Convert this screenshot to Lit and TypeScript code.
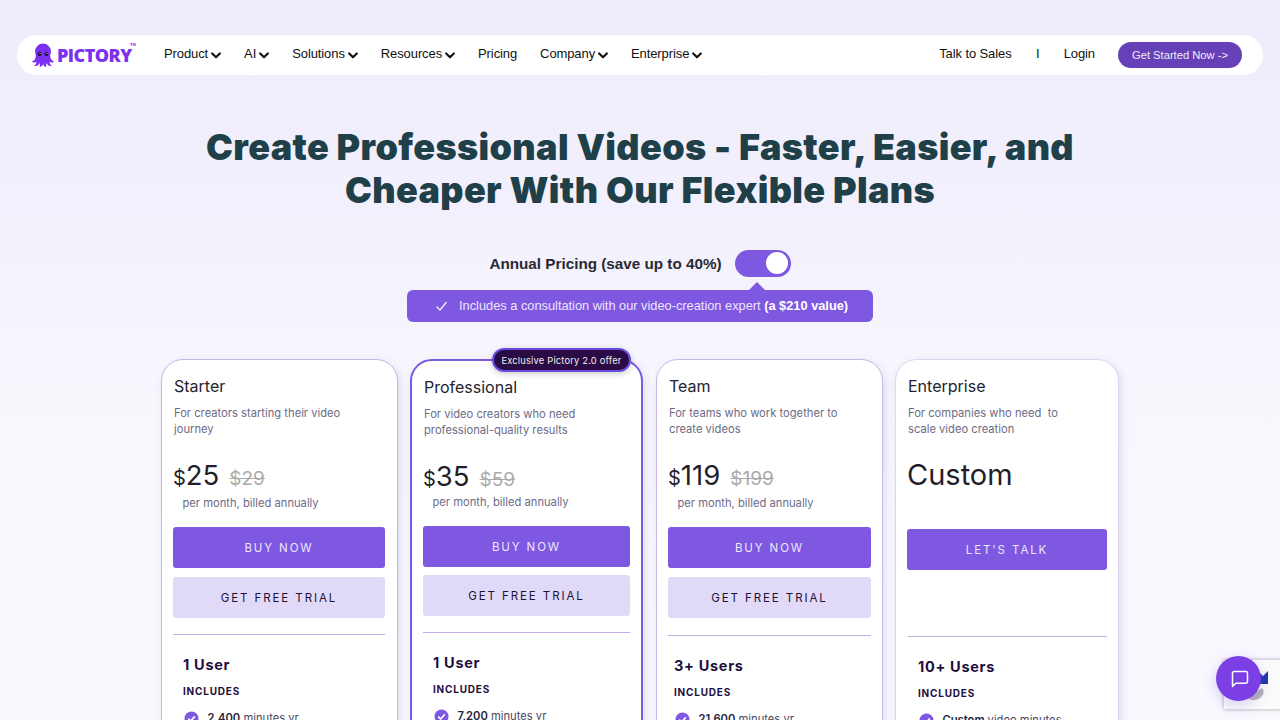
import { LitElement, html, css } from "lit";
import { customElement } from "lit/decorators.js";

const chev = html`<svg class="chev" width="10" height="7" viewBox="0 0 10 7"><path d="M1.2 1.5 5 5.2 8.8 1.5" fill="none" stroke="#111" stroke-width="2.2" stroke-linecap="round" stroke-linejoin="round"/></svg>`;

const octopus = html`<svg width="24" height="24" viewBox="0 0 24 24" class="octo">
  <ellipse cx="12" cy="8.6" rx="8" ry="8" fill="#7c2ff0"/>
  <path d="M5 12C4.5 16 3.5 18 1 18.2 1.5 19.6 4 20 5.5 18.8 5.5 20.5 4.5 22 3 22.6 5 23.6 7.5 22.4 8.6 20 9 21.5 9 23 8.4 24 10.5 24 11.6 22.6 12 21 12.4 22.6 13.5 24 15.6 24 15 23 15 21.5 15.4 20 16.5 22.4 19 23.6 21 22.6 19.5 22 18.5 20.5 18.5 18.8 20 20 22.5 19.6 23 18.2 20.5 18 19.5 16 19 12Z" fill="#7c2ff0"/>
  <circle cx="8.6" cy="11" r="1.9" fill="#1b0b33"/><circle cx="15.4" cy="11" r="1.9" fill="#1b0b33"/>
  <circle cx="9" cy="10.5" r=".6" fill="#fff"/><circle cx="15.8" cy="10.5" r=".6" fill="#fff"/>
</svg>`;

interface Plan {
  cls: string; name: string; desc: unknown; price?: string; old?: string;
  cta: string; trial: boolean; users: string; bold: string; rest: string;
}
const plans: Plan[] = [
  { cls: "starter", name: "Starter", desc: html`For creators starting their video<br>journey`, price: "25", old: "$29", cta: "BUY NOW", trial: true, users: "1 User", bold: "2,400", rest: " minutes yr" },
  { cls: "pro", name: "Professional", desc: html`For video creators who need<br>professional-quality results`, price: "35", old: "$59", cta: "BUY NOW", trial: true, users: "1 User", bold: "7,200", rest: " minutes yr" },
  { cls: "team", name: "Team", desc: html`For teams who work together to<br>create videos`, price: "119", old: "$199", cta: "BUY NOW", trial: true, users: "3+ Users", bold: "21,600", rest: " minutes yr" },
  { cls: "ent", name: "Enterprise", desc: html`For companies who need&nbsp; to<br>scale video creation`, cta: "LET'S TALK", trial: false, users: "10+ Users", bold: "Custom", rest: " video minutes" },
];

@customElement("app-root")
export class AppRoot extends LitElement {
  static styles = css`
    :host { display: block; height: 720px; overflow: hidden; position: relative; font-family: "Liberation Sans", Arial, sans-serif;
      background: linear-gradient(180deg, #eeecfb 0, #f2f0fc 200px, #f8f7fe 400px, #f9f8fe 720px); }
    .nav { display: flex; align-items: center; height: 40px; margin: 0 17px; position: relative; top: 35px; background: #fff; border-radius: 20px; padding: 0 21px 0 14px; }
    .logo { display: flex; align-items: center; width: 133px; position: relative; }
    .logo span { font: 800 18px/24px "Open Sans", sans-serif; color: #7c2ff0; letter-spacing: -.55px; margin-left: 2px; }
    .octo { flex: none; }
    .tm { position: absolute; left: 99px; top: -1px; font: 700 4px/6px "Liberation Sans", sans-serif; color: #7c2ff0; }
    .links { display: flex; gap: 23px; flex: 1; position: relative; top: -1px; }
    .link { font-size: 13px; letter-spacing: -.1px; line-height: 20px; color: #111; white-space: nowrap; display: flex; align-items: center; gap: 3px; }
    .chev { position: relative; top: 1px; }
    .right { display: flex; align-items: center; }
    .talk { font-size: 13px; letter-spacing: -.1px; color: #111; position: relative; top: -2px; }
    .sep { font-size: 13px; margin: 0 24px 0 24.5px; color: #111; position: relative; top: -2px; }
    .go { margin-left: 23px; width: 124px; height: 26px; border-radius: 13px; background: #6540b6; color: #f1ecfb; font-size: 11.2px; display: flex; align-items: center; justify-content: center; }
    .main { padding-top: 51px; position: relative; top: 35px; }
    h1 { margin: 0; text-align: center; font: 900 36px/43px Inter, sans-serif; color: #1f3f49; letter-spacing: .35px; }
    .toggle-row { display: flex; justify-content: center; align-items: center; margin-top: 37px; height: 28px; gap: 13px; }
    .toggle-label { font-size: 15.25px; font-weight: 700; color: #2a2a33; }
    .toggle { width: 56px; height: 27px; border-radius: 14px; background: #7f58e2; position: relative; }
    .knob { position: absolute; right: 3px; top: 2.5px; width: 22px; height: 22px; background: #fff; border-radius: 50%; }
    .note-wrap { display: flex; justify-content: center; margin-top: 13px; }
    .note { position: relative; width: 466px; height: 32px; border-radius: 6px; background: #7f58e2; color: #ebe6fb; font-size: 12.8px; display: flex; align-items: center; box-sizing: border-box; padding: 0 0 1px 28px; white-space: pre; }
    .note::before { content: ""; position: absolute; left: 342px; top: -8px; width: 0; height: 0; border-left: 8px solid transparent; border-right: 8px solid transparent; border-bottom: 8px solid #7f58e2; }
    .note svg { margin-right: 11px; }
    .note b { color: #fff; }
    .cards { display: flex; margin: 37px 0 0 161px; align-items: flex-start; font-family: Inter, sans-serif; }
    .card { box-sizing: border-box; background: #fff; border: 1px solid #c9b6e6; border-radius: 22px; padding: 15px 11px 0; height: 500px; flex: none; box-shadow: 2px 3px 8px rgba(70,50,130,.14); position: relative; }
    .starter { width: 237px; margin-right: 12px; padding-right: 12px; }
    .pro { width: 233px; margin-right: 13px; border: 2px solid #7b5ae0; }
    .team { width: 227px; margin-right: 12px; }
    .ent { width: 224px; border-color: #ddd6f1; }
    .badge { position: absolute; top: -13px; right: 10px; height: 24px; width: 139px; box-sizing: border-box; border: 2px solid #6a4be0; border-radius: 12px; background: #2a0b45; color: #eee; font-size: 9.3px; display: flex; align-items: center; justify-content: center; letter-spacing: .2px; box-shadow: 0 2px 6px rgba(0,0,0,.2); white-space: nowrap; }
    .name { padding-left: 1px; font-size: 16px; line-height: 22px; color: #24232f; }
    .desc { padding-left: 1px; margin-top: 8px; font-size: 11.2px; line-height: 16px; color: #6d6b86; height: 33px; }
    .price { margin-top: 18px; height: 38px; display: flex; align-items: baseline; color: #1f1f2b; }
    .cur { font-size: 20px; }
    .amt { font-size: 27.5px; line-height: 38px; }
    .old { font-size: 19px; color: #aaa; text-decoration: line-through; margin-left: 10px; }
    .cust { font-size: 29px; line-height: 38px; color: #1f1f2b; }
    .per { margin: 1px 0 0 9.5px; font-size: 11.2px; line-height: 16px; color: #6d6b86; height: 16px; }
    .pro .per { margin-top: -1px; }
    .btn { display: flex; align-items: center; justify-content: center; height: 41px; border-radius: 3px; font-size: 11.5px; letter-spacing: 1.9px; box-sizing: border-box; }
    .buy { margin-top: 16px; background: #7f58e2; color: #ece7fb; }
    .ent .buy { margin-top: 18px; }
    .trial { margin-top: 9px; background: #e0daf8; color: #1c1233; }
    .pro .trial { margin-top: 8px; }
    .spacer { height: 50px; }
    .rule { margin-top: 16px; height: 1px; background: #c5ace8; }
    .team .rule { margin-top: 17px; }
    .ent .rule { margin-left: 1px; }
    .users { margin: 21px 0 0 10px; font-size: 14.5px; font-weight: 700; line-height: 18px; color: #1d0e3d; letter-spacing: .7px; }
    .inc { margin: 10px 0 0 10px; font-size: 10px; line-height: 14px; font-weight: 700; color: #1d0e3d; letter-spacing: .8px; }
    .item { margin: 12px 0 0 11px; display: flex; align-items: center; gap: 8.5px; font-size: 11.2px; line-height: 16px; color: #4a4860; }
    .team .users, .team .inc { margin-left: 6px; }
    .team .item { margin-left: 7px; }
    .ent .users, .ent .inc { margin-left: 11px; }
    .ent .item { margin-left: 12px; }
    .item b { font-weight: 600; color: #26243a; }
    .recaptcha { position: absolute; left: 1224px; top: 660px; width: 60px; height: 49px; background: #fbfbfb; box-shadow: 0 0 4px rgba(0,0,0,.35); overflow: hidden; }
    .chat { position: absolute; left: 1216px; top: 656px; width: 45px; height: 45px; border-radius: 50%; background: #7b3fe4; display: flex; align-items: center; justify-content: center; box-shadow: 0 4px 14px rgba(110,70,220,.25); }
    .chat svg { margin-left: 3px; }
  `;

  card(p: Plan) {
    return html`<div class="card ${p.cls}">
      ${p.cls === "pro" ? html`<div class="badge">Exclusive Pictory 2.0 offer</div>` : ""}
      <div class="name">${p.name}</div>
      <div class="desc">${p.desc}</div>
      ${p.price
        ? html`<div class="price"><span class="cur">$</span><span class="amt">${p.price}</span><span class="old">${p.old}</span></div>
               <div class="per">per month, billed annually</div>`
        : html`<div class="price"><span class="cust">Custom</span></div><div class="per"></div>`}
      <div class="btn buy">${p.cta}</div>
      ${p.trial ? html`<div class="btn trial">GET FREE TRIAL</div>` : html`<div class="spacer"></div>`}
      <div class="rule"></div>
      <div class="users">${p.users}</div>
      <div class="inc">INCLUDES</div>
      <div class="item">
        <svg width="15" height="15" viewBox="0 0 15 15"><circle cx="7.5" cy="7.5" r="7" fill="#7f58e2"/><path d="M4.2 7.6 6.6 10 10.8 5.4" fill="none" stroke="#fff" stroke-width="1.6"/></svg>
        <span><b>${p.bold}</b>${p.rest}</span>
      </div>
    </div>`;
  }

  render() {
    return html`
      <nav class="nav">
        <div class="logo">${octopus}<span>PICTORY</span><i class="tm">TM</i></div>
        <div class="links">
          <div class="link">Product ${chev}</div>
          <div class="link">AI ${chev}</div>
          <div class="link">Solutions ${chev}</div>
          <div class="link">Resources ${chev}</div>
          <div class="link">Pricing</div>
          <div class="link">Company ${chev}</div>
          <div class="link">Enterprise ${chev}</div>
        </div>
        <div class="right">
          <div class="talk">Talk to Sales</div><div class="sep">I</div><div class="talk">Login</div>
          <div class="go">Get Started Now -&gt;</div>
        </div>
      </nav>
      <main class="main">
        <h1>Create Professional Videos - Faster, Easier, and<br>Cheaper With Our Flexible Plans</h1>
        <div class="toggle-row">
          <div class="toggle-label">Annual Pricing (save up to 40%)</div>
          <div class="toggle"><div class="knob"></div></div>
        </div>
        <div class="note-wrap"><div class="note">
          <svg width="13" height="12" viewBox="0 0 13 12"><path d="M1.5 6.5 5 10 11.5 2" fill="none" stroke="#f3f0fd" stroke-width="1.3"/></svg><span>Includes a consultation with our video-creation expert <b>(a $210 value)</b></span>
        </div></div>
        <div class="cards">${plans.map((p) => this.card(p))}</div>
      </main>
      <div class="recaptcha"><svg width="56" height="49" viewBox="0 0 56 49">
        <path d="M36 13 39 16 44 11 44 24 36 24Z" fill="#1c3aa9"/><path d="M19 30C25 33 33 32 38 28 42 32 38 39 31 40 25 41 21 36 19 30Z" fill="#b4b4b8"/>
      </svg></div>
      <div class="chat"><svg width="20" height="20" viewBox="0 0 24 24"><path d="M21 15a2 2 0 0 1-2 2H7l-4 4V5a2 2 0 0 1 2-2h14a2 2 0 0 1 2 2z" fill="none" stroke="#fff" stroke-width="1.8" stroke-linejoin="round"/></svg></div>
    `;
  }
}
